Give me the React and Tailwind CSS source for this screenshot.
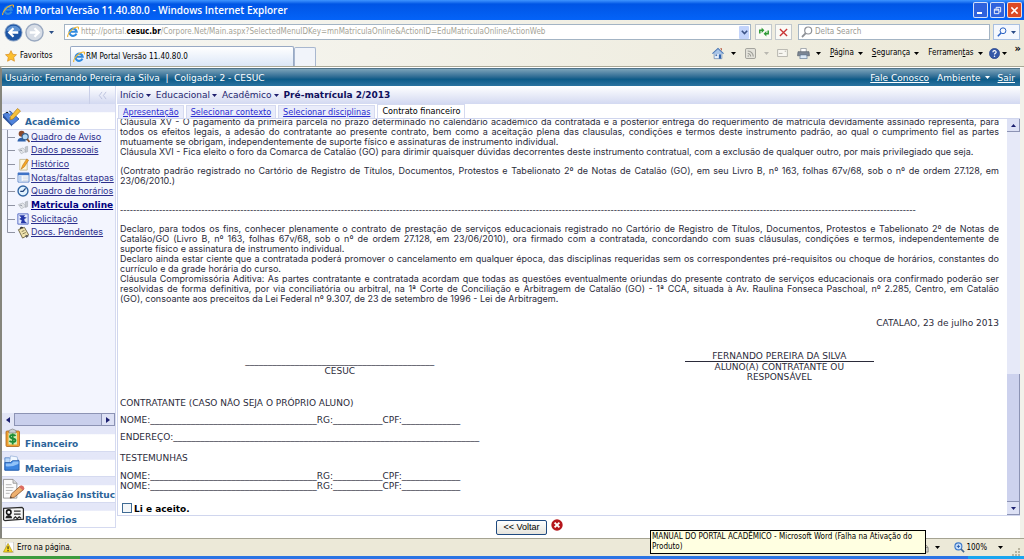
import React from "react";

const Caret = ({ className = "" }) => (
  <svg viewBox="0 0 5 3" className={"h-[3px] w-[5px] shrink-0 " + className} fill="currentColor">
    <path d="M0 0h5L2.5 3z" />
  </svg>
);

const IELogo = ({ className = "" }) => (
  <svg viewBox="0 0 16 16" className={"h-[12px] w-[12px] shrink-0 " + className} fill="none">
    <path d="M12.6 10.2A4.8 4.8 0 1 1 12.9 7.6H4.5" stroke="#2f8ae0" strokeWidth="2.8" />
    <path d="M1.2 14.6C-.8 11 8.500 1.200 14.400 1.300c1.400.2 1.200 1.900.5 3.200" stroke="#f3b62c" strokeWidth="1.500" />
  </svg>
);

const BackIcon = () => (
  <svg viewBox="0 0 20 20" className="h-[19px] w-[19px]">
    <circle cx="10" cy="10" r="9.500" fill="#8ba3c4" />
    <circle cx="10" cy="10" r="8.500" fill="#1d55a5" />
    <path d="M2.500 8a8 8 0 0 1 15 0q-7.500 3-15 0z" fill="#5f93d3" />
    <path d="M15 10H6m4-4.500L5.500 10l4.500 4.500" fill="none" stroke="#fff" strokeWidth="2.400" />
  </svg>
);

const ForwardIcon = () => (
  <svg viewBox="0 0 20 20" className="h-[19px] w-[19px]">
    <circle cx="10" cy="10" r="9" fill="#d7dde6" stroke="#9aa9c0" strokeWidth="1.500" />
    <path d="M5 10h9m-4-4.500 4.500 4.500-4.500 4.500" fill="none" stroke="#fff" strokeWidth="2.400" />
  </svg>
);

const StarIcon = () => (
  <svg viewBox="0 0 14 14" className="h-[12px] w-[12px]">
    <path d="M7 .8 9 5l4.400.500-3.200 3.100.8 4.500L7 10.900 3 13.100l.8-4.500L.6 5.500 5 5z" fill="#fbbf2f" stroke="#d88a1c" strokeWidth=".8" />
  </svg>
);

const Magnifier = ({ className = "h-[12px] w-[12px]" }) => (
  <svg viewBox="0 0 12 12" className={"shrink-0 " + className} fill="none" stroke="currentColor">
    <circle cx="7.200" cy="4.500" r="3.500" strokeWidth="1.200" />
    <path d="M4.800 7.200 1 11" strokeWidth="1.800" />
  </svg>
);

const RefreshIcon = () => (
  <svg viewBox="0 0 12 12" className="h-[12px] w-[12px]" fill="none" stroke="#2f9a35" strokeWidth="1.500">
    <path d="M1.800 7.500V4.300h2.500" />
    <path d="M3.600 1.600 6.400 4.300 3.600 7z" fill="#2f9a35" stroke="none" />
    <path d="M10.200 4.500v3.200H7.700" />
    <path d="M8.400 5 5.600 7.700l2.800 2.700z" fill="#2f9a35" stroke="none" />
  </svg>
);

const StopIcon = () => (
  <svg viewBox="0 0 10 10" className="h-[9px] w-[9px]" stroke="#c93434" strokeWidth="1.500">
    <path d="M1 1l8 8M9 1 1 9" />
  </svg>
);

const HomeIcon = () => (
  <svg viewBox="0 0 14 14" className="h-[13px] w-[12px]">
    <path d="M2.500 6.500h9V13h-9z" fill="#e8f0fa" stroke="#5c7da8" strokeWidth=".8" />
    <path d="M.5 7.200 7 1l6.500 6.200" fill="#a7c4e8" stroke="#4d78b4" strokeWidth="1.200" />
    <path d="M9.500 1h2v3z" fill="#b34d35" />
    <path d="M8 8h2.500v5H8z" fill="#2f62ad" />
    <path d="M4 8h2v2H4z" fill="#4b77b5" />
  </svg>
);

const FeedIcon = () => (
  <svg viewBox="0 0 12 12" className="h-[11px] w-[11px]" fill="none" stroke="#9a9a94">
    <rect x=".5" y=".5" width="11" height="11" rx="1.500" fill="#e3e2da" />
    <path d="M3 3.200a6 6 0 0 1 6 6M3 6a3.200 3.200 0 0 1 3.200 3.200" strokeWidth="1.200" />
    <circle cx="3.500" cy="8.700" r=".8" fill="#9a9a94" stroke="none" />
  </svg>
);

const MailIcon = () => (
  <svg viewBox="0 0 12 9" className="h-[8px] w-[11px]" fill="#f7f6f0" stroke="#b1b0a8">
    <path d="M.5.500h11v8H.5z" />
    <path d="M2 5h4M8.500 2.500h1.500" />
  </svg>
);

const PrinterIcon = () => (
  <svg viewBox="0 0 14 12" className="h-[11px] w-[13px]">
    <path d="M4 .5h6V5H4z" fill="#fff" stroke="#777f8c" strokeWidth=".7" />
    <path d="M1 4h12l.5 4.500H.5z" fill="#7c8694" stroke="#555e6b" strokeWidth=".7" />
    <path d="M3.500 7.500h7L11 11.500H3z" fill="#dce9f7" stroke="#57708e" strokeWidth=".7" />
  </svg>
);

const HelpIcon = () => (
  <svg viewBox="0 0 12 12" className="h-[11px] w-[11px]">
    <circle cx="6" cy="6" r="5.600" fill="#3558a8" stroke="#223d80" strokeWidth=".6" />
    <path d="M4.200 4.600C4.300 2.400 7.900 2.400 7.800 4.600 7.700 5.800 6 5.800 6 7.200" fill="none" stroke="#fff" strokeWidth="1.300" />
    <circle cx="6" cy="9" r=".8" fill="#fff" />
  </svg>
);

const ModuleAcademic = () => (
  <svg viewBox="0 0 20 20" className="h-[20px] w-[20px]">
    <path d="M1 7.500 8 4l9 8-7 6z" fill="#4f83dc" stroke="#2450a0" strokeWidth=".8" />
    <path d="M1 7.500v3L10 19.500V18z" fill="#2450a0" />
    <path d="M3 5.500 5 3.500l3 3M8 9l2 2" stroke="#d7e6ff" strokeWidth="1.500" />
    <path d="M8.500 9.500 15.500 1.500l3 2.500-7.500 8-3 .7z" fill="#f6c13c" stroke="#b07c18" strokeWidth=".7" />
  </svg>
);

const ModuleFinance = () => (
  <svg viewBox="0 0 20 20" className="h-[20px] w-[20px]">
    <rect x="4" y="3" width="13.500" height="15.500" rx="1" fill="#f0a030" stroke="#a8641c" strokeWidth=".8" />
    <path d="M6.500 5h8.500v11.500H6.500z" fill="#d4efb6" />
    <path d="M7 5V2.500q3.500-3 7 0V5z" fill="#c9ccd1" stroke="#777" strokeWidth=".6" />
    <path d="M13.500 8c-1-1.500-5.500-1.500-5.500.8 0 2.200 5.500 1.200 5.500 3.500 0 2.400-4.800 2-6 .5M10.700 5.500v11" fill="none" stroke="#1f8c35" strokeWidth="1.800" />
  </svg>
);

const ModuleMaterials = () => (
  <svg viewBox="0 0 20 20" className="h-[19px] w-[19px]">
    <path d="M3 4h5l1.500 2H17v11H3z" fill="#bcd9fa" stroke="#4777bd" strokeWidth=".8" />
    <path d="M9 2l7 1 1 6H8z" fill="#f2f8ff" stroke="#7da0d0" strokeWidth=".6" />
    <path d="M3 9h6l2-2h7v10H3z" fill="#3d85e0" stroke="#1d55a5" strokeWidth=".8" />
    <path d="M4 10h6l2-2h5.500l-.3 2.500Q10 14 4 13z" fill="#91c2f8" />
  </svg>
);

const ModuleEvaluation = () => (
  <svg viewBox="0 0 24 22" className="h-[22px] w-[24px]">
    <path d="M1.500 1h10l4 4v15.500h-14z" fill="#fcfcfc" stroke="#8d8d8d" strokeWidth=".9" />
    <path d="M11.500 1v4h4" fill="#ddd" stroke="#8d8d8d" strokeWidth=".8" />
    <path d="M4 6.500h6M4 9.500h8M4 12.500h7M4 15.500h4" stroke="#b5b5b5" />
    <path d="M8.500 20.500l1.500-4.500 9-8 3.500 3.500-9.500 8z" fill="#eeb06f" stroke="#8f5b35" strokeWidth=".9" />
    <path d="M18 9l2-2q3 .5 3.500 3.500l-1.500 2z" fill="#dc6b62" />
    <path d="M8.500 20.500l.6-1.900 1.400 1.200z" fill="#333" />
  </svg>
);

const ModuleReports = () => (
  <svg viewBox="0 0 24 18" className="h-[17px] w-[23px]">
    <path d="M1.500 2.500 21 1.500l1.500 1.500v11L3 15.500l-1.500-1z" fill="#f5f5f5" stroke="#2b2b2b" strokeWidth="1.300" />
    <circle cx="7" cy="6.500" r="2.400" fill="#fff" stroke="#111" strokeWidth="1.600" />
    <path d="M3.500 13c.3-4.500 6.700-4.500 7 0z" fill="#222" />
    <path d="M12.500 5.500h7M12.500 8.500h7" stroke="#333" strokeWidth="1.300" />
    <path d="M12 13.500l2-2 2 2 2-2 2 1.500" stroke="#222" fill="none" strokeWidth="1.200" />
  </svg>
);

const NoticeIcon = () => (
  <svg viewBox="0 0 14 14" className="h-[13px] w-[13px]">
    <circle cx="5" cy="4" r="3.200" fill="#8a4a2b" />
    <path d="M.5 12.500C.5 7 9 7 9.500 12.500z" fill="#2e62ad" />
    <circle cx="8.800" cy="7.200" r="3.300" fill="#b5dcf7" stroke="#35618f" strokeWidth="1.200" />
    <path d="M11 9.800l2.500 3" stroke="#8c4f22" strokeWidth="1.800" />
  </svg>
);

const CardIcon = () => (
  <svg viewBox="0 0 14 12" className="h-[10px] w-[12px]">
    <path d="M1.500 5.500 7 3.500l3.500 4-5.500 3z" fill="#e3e6ea" stroke="#b1b5bb" strokeWidth=".8" />
    <path d="M3 6.500q2-1.500 3 1" fill="none" stroke="#848c99" />
    <path d="M9.500 2.500l3-1v6.500l-2.500 1z" fill="#c5c9cf" stroke="#9da3ac" strokeWidth=".6" />
  </svg>
);

const HistoryIcon = () => (
  <svg viewBox="0 0 14 14" className="h-[13px] w-[13px]">
    <path d="M3 1.500h8v11.500H3z" fill="#fdf6da" stroke="#b9ad83" strokeWidth=".8" />
    <path d="M4.500 12 6 8l4.500-7 2 1.300L8 9.500z" fill="#f5a823" stroke="#b76d17" strokeWidth=".6" />
  </svg>
);

const TableIcon = () => (
  <svg viewBox="0 0 14 12" className="h-[11px] w-[13px]">
    <path d="M1 1h12v10H1z" fill="#fff" stroke="#5d86c8" />
    <path d="M1 1h12v2.500H1z" fill="#3f73c7" />
    <path d="M2 4h3v6.500H2z" fill="#bdd4f3" />
    <path d="M6 5.500h6M6 7.500h6M6 9.500h6" stroke="#b4c2d8" strokeWidth=".7" />
  </svg>
);

const ClockIcon = () => (
  <svg viewBox="0 0 14 14" className="h-[12px] w-[12px]">
    <circle cx="7" cy="7" r="5.800" fill="#e0f1fd" stroke="#2f64a3" strokeWidth="1.600" />
    <path d="M10 4 7 7.500H3.800" fill="none" stroke="#1d3f78" strokeWidth="1.500" />
  </svg>
);

const RequestIcon = () => (
  <svg viewBox="0 0 14 14" className="h-[12px] w-[12px]">
    <path d="M1 1h12v12H1z" fill="#e3e9fb" stroke="#4a5fc0" />
    <path d="M2.500 2.500h7L8 4.500l3.500 1L8.500 7l.5 2.500 3 2.500H4.500l1-3.500L2.500 7 5 5.500z" fill="#2638a8" />
  </svg>
);

const DocsIcon = () => (
  <svg viewBox="0 0 14 14" className="h-[13px] w-[13px]">
    <path d="M1.500 4 8 1.500l4.500 8L6 13z" fill="#f1e4ae" stroke="#6e6541" />
    <path d="M3.500 3q.5-2.500 3-1" fill="none" stroke="#333" strokeWidth="1.300" />
    <path d="M5 6l3-1.200M6 8.500l3.500-1.500" stroke="#807950" />
    <path d="M9 9.500l4 1-3 2.500z" fill="#5b5b5b" />
  </svg>
);

const WarningIcon = () => (
  <svg viewBox="0 0 12 12" className="h-[11px] w-[11px]">
    <path d="M3 0h8.500v11.500H3z" fill="#fff" stroke="#aaa" strokeWidth=".5" />
    <path d="M5.500 1.500 10.500 11H.5z" fill="#f8d921" stroke="#a88b0c" strokeWidth=".7" />
    <path d="M5.500 4.500v3.500M5.500 8.800V10" stroke="#222" strokeWidth="1.200" />
  </svg>
);

const CancelIcon = () => (
  <svg viewBox="0 0 12 12" className="h-[12px] w-[12px]">
    <circle cx="6" cy="6" r="5.700" fill="#b5161c" />
    <path d="M3.600 3.600l4.800 4.800M8.400 3.600 3.600 8.400" stroke="#fff" strokeWidth="1.900" />
  </svg>
);

const LockIcon = () => (
  <svg viewBox="0 0 12 12" className="h-[11px] w-[11px]" fill="none" stroke="#8b8b86">
    <path d="M1 9a5 5 0 0 1 6-7" stroke="#b9c2cf" />
    <path d="M5 6h5v5H5z" fill="#d2d2cc" />
    <path d="M6 6V4.500q1.500-2 3 0V6" />
  </svg>
);

const ZoomIcon = () => (
  <svg viewBox="0 0 12 12" className="h-[11px] w-[11px]" fill="none">
    <circle cx="4.800" cy="4.800" r="3.800" fill="#cfe3fa" stroke="#3b78c9" strokeWidth="1.200" />
    <path d="M4.800 3v3.600M3 4.800h3.600" stroke="#2159ad" />
    <path d="M7.600 7.600 11 11" stroke="#41658f" strokeWidth="1.800" />
  </svg>
);

const menuItems = [
  { label: "Quadro de Aviso", icon: NoticeIcon },
  { label: "Dados pessoais", icon: CardIcon },
  { label: "Histórico", icon: HistoryIcon },
  { label: "Notas/faltas etapas", icon: TableIcon },
  { label: "Quadro de horários", icon: ClockIcon },
  { label: "Matricula online", icon: CardIcon, active: true },
  { label: "Solicitação", icon: RequestIcon },
  { label: "Docs. Pendentes", icon: DocsIcon },
];

const modules = [
  { label: "Financeiro", icon: ModuleFinance },
  { label: "Materiais", icon: ModuleMaterials },
  { label: "Avaliação Instituc", icon: ModuleEvaluation },
  { label: "Relatórios", icon: ModuleReports },
];

const tabs = ["Apresentação", "Selecionar contexto", "Selecionar disciplinas"];

function TitleBar() {
  return (
    <header className="flex h-[20px] shrink-0 items-center gap-[2px] bg-linear-to-b from-[#3f95ff] via-[#0055e5] via-20% to-[#0463f8] px-[2px] text-white">
      <IELogo />
      <h1 className="flex-1 truncate font-['Open_Sans',sans-serif] text-[10px] leading-[14px] font-semibold">
        RM Portal Versão 11.40.80.0 - Windows Internet Explorer
      </h1>
      <div className="flex gap-[2px]">
        <button aria-label="Minimizar" className="flex h-[16px] w-[15px] items-end rounded-[2px] border border-white/80 bg-[#2f62dd] p-[3px]">
          <span className="h-[2px] w-[5px] bg-white" />
        </button>
        <button aria-label="Restaurar" className="flex h-[16px] w-[15px] items-center justify-center rounded-[2px] border border-white/80 bg-[#2f62dd]">
          <svg viewBox="0 0 10 10" className="h-[9px] w-[9px]" fill="none" stroke="#fff">
            <path d="M3.500 3V1.500h5v5H7M1.500 3.500h5v5h-5zM1.500 4.500h5" />
          </svg>
        </button>
        <button aria-label="Fechar" className="flex h-[16px] w-[15px] items-center justify-center rounded-[2px] border border-white/80 bg-[#dc4a24]">
          <svg viewBox="0 0 10 10" className="h-[9px] w-[9px]" stroke="#fff" strokeWidth="1.700">
            <path d="M1.500 1.500l7 7M8.500 1.500l-7 7" />
          </svg>
        </button>
      </div>
    </header>
  );
}

function AddressRow() {
  return (
    <div className="flex h-[24px] items-center px-[4px]">
      <div className="flex items-center gap-[2px] pr-[10px]">
        <button aria-label="Voltar página"><BackIcon /></button>
        <button aria-label="Avançar página"><ForwardIcon /></button>
        <button aria-label="Páginas recentes" className="pl-[3px] text-[#2c4f86]"><Caret /></button>
      </div>
      <div className="flex h-[16px] flex-1 items-center border border-[#a3b4c4] bg-white pl-[2px]">
        <IELogo />
        <p className="flex-1 truncate pl-[2px] text-[8px] leading-[12px] text-[#a5a396]">
          http://portal.<b className="text-black">cesuc.br</b>/Corpore.Net/Main.aspx?SelectedMenuIDKey=mnMatriculaOnline&amp;ActionID=EduMatriculaOnlineActionWeb
        </p>
        <button aria-label="Endereços" className="mr-[1px] flex h-[13px] w-[10px] items-center justify-center rounded-[1px] bg-[#c3d4fb]">
          <svg viewBox="0 0 7 5" className="h-[5px] w-[7px]" fill="none" stroke="#3c5487" strokeWidth="1.600"><path d="M.8.800 3.500 3.500 6.200.8" /></svg>
        </button>
      </div>
      <button aria-label="Atualizar" className="ml-[4px] flex h-[16px] w-[17px] items-center justify-center border border-[#c2c8cc] bg-[#fafaf6]"><RefreshIcon /></button>
      <button aria-label="Parar" className="ml-[3px] flex h-[16px] w-[17px] items-center justify-center border border-[#c2c8cc] bg-[#fafaf6]"><StopIcon /></button>
      <label className="ml-[6px] flex h-[16px] w-[192px] items-center border border-[#a3b4c4] bg-white pl-[2px]">
        <Magnifier className="h-[12px] w-[12px] text-[#8e9197]" />
        <input aria-label="Pesquisar" placeholder="Delta Search" className="w-full bg-transparent pl-[2px] text-[8px] leading-[12px] outline-none placeholder:text-[#9a9a94]" />
      </label>
      <button aria-label="Buscar" className="ml-[3px] flex h-[16px] w-[27px] items-center justify-between border border-[#a9c0e0] bg-[#f5f8fd] px-[3px] text-[#2a62c4]">
        <Magnifier className="h-[10px] w-[10px]" />
        <Caret className="text-[#2a4b86]" />
      </button>
    </div>
  );
}

function CommandRow() {
  return (
    <div className="flex h-[22px] items-end pr-[3px]">
      <button className="mb-[4px] flex w-[65px] items-center gap-[3px] pl-[5px] text-[8px] leading-[12px]">
        <StarIcon /> Favoritos
      </button>
      <div className="ml-[5px] flex h-[20px] w-[224px] items-center gap-[1px] rounded-t-[2px] border border-b-0 border-[#98a9c4] bg-linear-to-b from-white to-[#dce7f7] pl-[2px] text-[8px] leading-[12px]">
        <IELogo /> RM Portal Versão 11.40.80.0
      </div>
      <button aria-label="Nova guia" className="h-[19px] w-[22px] rounded-t-[2px] border border-b-0 border-[#a8b7cf] bg-[#f1f4fa]" />
      <div className="mb-[5px] ml-auto flex items-center text-[8px] leading-[12px]">
        <button aria-label="Página inicial" className="flex items-center gap-[7px]"><HomeIcon /><Caret /></button>
        <button aria-label="Feeds" className="ml-[9px] flex items-center gap-[8px] text-[#b9b8b0]"><FeedIcon /><Caret /></button>
        <button aria-label="Correio" className="ml-[8px]"><MailIcon /></button>
        <button aria-label="Imprimir" className="ml-[9px] flex items-center gap-[6px]"><PrinterIcon /><Caret /></button>
        <button className="ml-[9px] flex items-center gap-[4px]"><span><u>P</u>ágina</span><Caret /></button>
        <button className="ml-[9px] flex items-center gap-[4px]"><span><u>S</u>egurança</span><Caret /></button>
        <button className="ml-[9px] flex items-center gap-[4px]"><span>Ferramen<u>t</u>as</span><Caret /></button>
        <button aria-label="Ajuda" className="ml-[6px] flex items-center gap-[2px]"><HelpIcon /><Caret /></button>
        <button aria-label="Mais comandos" className="mb-[8px] ml-[8px] text-[11px] leading-[8px] font-bold">»</button>
      </div>
    </div>
  );
}

function PortalHeader() {
  return (
    <div className="flex h-[18px] shrink-0 items-center border-t border-[#50748a] bg-linear-to-b from-[#7ba3b9] via-[#0b5b88] via-60% to-[#2a73a0] px-[3px] text-[9px] leading-[12px] text-white">
      <p className="flex-1 whitespace-pre">Usuário: Fernando Pereira da Silva  |  Coligada: 2 - CESUC</p>
      <nav className="flex items-center gap-[8px] pr-[2px]">
        <a href="#fale" className="underline">Fale Conosco</a>
        <button className="flex items-center gap-[4px]">Ambiente <Caret /></button>
        <a href="#sair" className="underline">Sair</a>
      </nav>
    </div>
  );
}

function Module({ label, icon: Icon }) {
  return (
    <button className="flex min-h-0 w-full flex-1 items-center overflow-hidden border-b border-[#d5daf0] bg-linear-to-b from-[#e4e7f8] from-30% to-white to-35% text-left">
      <span className="flex w-[23px] shrink-0 items-center"><Icon /></span>
      <span className="pt-[11px] text-[9px] leading-[12px] font-bold whitespace-nowrap text-[#2c6499]">{label}</span>
    </button>
  );
}

function Sidebar() {
  return (
    <aside className="flex w-[114px] shrink-0 flex-col overflow-hidden border-r border-[#d5daf0]">
      <div className="flex h-[18px] shrink-0 items-center justify-end bg-linear-to-b from-white to-[#d3d9f1] text-[#b9c0dc]">
        <button aria-label="Recolher menu" className="flex h-full w-[26px] items-center justify-center border-l border-[#c9cfe8]">
          <svg viewBox="0 0 10 10" className="h-[9px] w-[9px]" fill="none" stroke="currentColor"><path d="M4.500 1l-3 4 3 4M9 1 6 5l3 4" /></svg>
        </button>
      </div>
      <div className="flex h-[26px] shrink-0">
        <Module label="Acadêmico" icon={ModuleAcademic} />
      </div>
      <div className="flex min-h-0 flex-1 flex-col bg-[#f3f5fe]">
        <ul className="ml-[5px] flex h-[109px] flex-col">
          {menuItems.map(({ label, icon: Icon, active }, i) => (
            <li key={label} className="flex min-h-0 flex-1 items-center">
              <svg viewBox="0 0 8 14" className="h-[14px] w-[8px] shrink-0" stroke="#8f93a3" fill="none">
                <path d={i === menuItems.length - 1 ? "M.5 0v7.500H8" : "M.5 0v14M0 7.500h8"} />
              </svg>
              <span className="flex w-[16px] shrink-0 items-center justify-center"><Icon /></span>
              <a
                href="#menu"
                className={
                  active
                    ? "text-[9px] leading-[12px] font-bold whitespace-nowrap text-[#000080] underline"
                    : "font-['Inter','DejaVu_Sans',sans-serif] text-[9px] leading-[12px] whitespace-nowrap text-[#2c2f8c] underline"
                }
              >
                {label}
              </a>
            </li>
          ))}
        </ul>
        <div className="mt-auto flex h-[13px] shrink-0 bg-[#e3e6f6] text-[#1b1f70]">
          <button aria-label="Rolar para a esquerda" className="flex w-[12px] items-center justify-center">
            <svg viewBox="0 0 4 6" className="h-[6px] w-[4px]" fill="currentColor"><path d="M4 0v6L0 3z" /></svg>
          </button>
          <div className="flex-1 border border-[#8c93b4] bg-[#c9cfec]" />
          <button aria-label="Rolar para a direita" className="flex w-[13px] items-center justify-center border border-l-0 border-[#8c93b4] bg-[#dde1f5]">
            <svg viewBox="0 0 4 6" className="h-[6px] w-[4px]" fill="currentColor"><path d="M0 0v6l4-3z" /></svg>
          </button>
        </div>
      </div>
      <div className="flex h-[102px] shrink-0 flex-col">
        {modules.map((m) => (
          <Module key={m.label} {...m} />
        ))}
      </div>
    </aside>
  );
}

function Contract() {
  return (
    <article className="-mt-[2px] min-w-0 flex-1 pr-[8px] pl-[2px] text-[9px] leading-[10px] text-[#2b2b3a]">
      <div className="text-justify font-['Inter','DejaVu_Sans',sans-serif]">
        <p>
          Cláusula XV - O pagamento da primeira parcela no prazo determinado no calendário acadêmico da contratada e a posterior entrega do requerimento de matrícula devidamente assinado representa, para todos os efeitos legais, a adesão do contratante ao presente contrato, bem como a aceitação plena das clausulas, condições e termos deste instrumento padrão, ao qual o cumprimento fiel as partes mutuamente se obrigam, independentemente de suporte físico e assinaturas de instrumento individual.
        </p>
        <p>
          Cláusula XVI - Fica eleito o foro da Comarca de Catalão (GO) para dirimir quaisquer dúvidas decorrentes deste instrumento contratual, com a exclusão de qualquer outro, por mais privilegiado que seja.
        </p>
        <p className="mt-[9px]">
          (Contrato padrão registrado no Cartório de Registro de Títulos, Documentos, Protestos e Tabelionato 2º de Notas de Catalão (GO), em seu Livro B, nº 163, folhas 67v/68, sob o nº de ordem 27.128, em 23/06/2010.)
        </p>
      </div>
      <p className="mt-[19px] overflow-hidden whitespace-nowrap">{"-".repeat(245)}</p>
      <div className="mt-[9px] text-justify font-['Inter','DejaVu_Sans',sans-serif]">
        <p>
          Declaro, para todos os fins, conhecer plenamente o contrato de prestação de serviços educacionais registrado no Cartório de Registro de Títulos, Documentos, Protestos e Tabelionato 2º de Notas de Catalão/GO (Livro B, nº 163, folhas 67v/68, sob o nº de ordem 27.128, em 23/06/2010), ora firmado com a contratada, concordando com suas cláusulas, condições e termos, independentemente de suporte&nbsp;físico e assinatura de instrumento individual.
        </p>
        <p>
          Declaro ainda estar ciente que a contratada poderá promover o cancelamento em qualquer época, das disciplinas requeridas sem os correspondentes pré-requisitos ou choque de horários, constantes do currículo e da grade horária do curso.
        </p>
        <p>
          Cláusula Compromissória Aditiva: As partes contratante e contratada acordam que todas as questões eventualmente oriundas do presente contrato de serviços educacionais ora confirmado poderão ser resolvidas de forma definitiva, por via conciliatória ou arbitral, na 1ª Corte de Conciliação e Arbitragem de Catalão (GO) - 1ª CCA, situada à Av. Raulina Fonseca Paschoal, nº 2.285, Centro, em Catalão (GO),&nbsp;consoante aos preceitos da Lei Federal nº 9.307, de 23 de setembro de 1996 - Lei de Arbitragem.
        </p>
      </div>
      <p className="mt-[14px] text-right">CATALAO, 23 de julho 2013</p>
      <div className="mt-[23px] grid grid-cols-2 text-center">
        <div className="pt-[5px]">
          <p>{"_".repeat(42)}</p>
          <p>CESUC</p>
        </div>
        <div>
          <p className="mx-auto w-[189px] border-b border-[#2b2b3a]">FERNANDO PEREIRA DA SILVA</p>
          <p className="mx-auto w-[140px]">ALUNO(A) CONTRATANTE OU RESPONSÁVEL</p>
        </div>
      </div>
      <p className="mt-[16px]">CONTRATANTE (CASO NÃO SEJA O PRÓPRIO ALUNO)</p>
      <p className="mt-[7px]">NOME:{"_".repeat(37)}RG:{"_".repeat(11)}CPF:{"_".repeat(13)}</p>
      <p className="mt-[7px]">ENDEREÇO:{"_".repeat(68)}</p>
      <p className="mt-[11px]">TESTEMUNHAS</p>
      <p className="mt-[8px]">NOME:{"_".repeat(37)}RG:{"_".repeat(11)}CPF:{"_".repeat(13)}</p>
      <p>NOME:{"_".repeat(37)}RG:{"_".repeat(11)}CPF:{"_".repeat(13)}</p>
      <label className="mt-[10px] flex items-center gap-[2px] pl-[2px] font-bold text-black">
        <input type="checkbox" className="h-[10px] w-[10px] appearance-none border border-[#3f6a93] bg-[#f3f6f8]" />
        <span className="pt-[2px] leading-[12px]">Li e aceito.</span>
      </label>
    </article>
  );
}

function ScrollBar() {
  return (
    <div className="flex w-[13px] shrink-0 flex-col bg-[#e6e9f8] text-[#1b1f70]">
      <button aria-label="Rolar para cima" className="flex h-[13px] items-center justify-center border-r border-b border-[#8c93b4] bg-[#dde1f5]">
        <Caret className="rotate-180" />
      </button>
      <div className="flex-1" />
      <div className="h-[128px] border-r border-b border-[#8c93b4] bg-[#cdd2ee]" />
      <button aria-label="Rolar para baixo" className="flex h-[13px] items-center justify-center border-r border-b border-[#8c93b4] bg-[#dde1f5]">
        <Caret />
      </button>
    </div>
  );
}

function MainPane() {
  return (
    <main className="ml-[1px] flex min-w-0 flex-1 flex-col">
      <nav className="flex h-[18px] shrink-0 items-center gap-[5px] bg-linear-to-b from-white to-[#d3d9f1] pl-[3px] text-[9px] leading-[12px] text-[#1f1f6e]">
        <button className="flex items-center gap-[2px]">Início <Caret /></button>
        <button className="flex items-center gap-[2px]">Educacional <Caret /></button>
        <button className="flex items-center gap-[2px]">Acadêmico <Caret /></button>
        <b className="text-[#10105c]">Pré-matrícula 2/2013</b>
      </nav>
      <div className="flex h-[14px] shrink-0 items-end gap-[2px] pl-[1px] font-['DejaVu_Sans_Condensed','DejaVu_Sans',sans-serif] text-[9px] leading-[12px]">
        {tabs.map((t) => (
          <a key={t} href="#etapa" className="h-[13px] border border-b-0 border-[#d5daf0] bg-[#e9ecfa] px-[4px] text-[#2a2ad0] underline">
            {t}
          </a>
        ))}
        <span className="h-[14px] border border-b-0 border-[#d5daf0] bg-white px-[4px] text-black">Contrato financeiro</span>
      </div>
      <section className="flex min-h-0 flex-1 overflow-hidden border border-r-0 border-[#d0d6ee]">
        <Contract />
        <ScrollBar />
      </section>
      <div className="flex h-[22px] shrink-0 items-center justify-center gap-[4px] pr-[78px]">
        <button className="h-[15px] rounded-[2px] border border-[#1f4a80] bg-linear-to-b from-white to-[#e6e4dc] px-[6px] font-['Liberation_Sans',sans-serif] text-[9px] leading-[12px]">
          &lt;&lt; Voltar
        </button>
        <button aria-label="Cancelar" className="mb-[4px]"><CancelIcon /></button>
      </div>
    </main>
  );
}

function StatusBar() {
  return (
    <footer className="relative flex h-[18px] shrink-0 items-center border-t border-[#a5a392] bg-[#ece9d8] pr-[4px] pl-[3px] text-[8px] leading-[12px]">
      <WarningIcon />
      <p className="flex-1 pl-[3px]">Erro na página.</p>
      <button aria-label="Segurança da página" className="flex items-center gap-[5px]"><LockIcon /><Caret /></button>
      <button className="ml-[14px] flex items-center gap-[1px]">
        <ZoomIcon />
        <span className="pr-[10px]">100%</span>
        <Caret />
      </button>
      <svg viewBox="0 0 8 8" className="ml-[9px] h-[8px] w-[8px] self-end" fill="#b8b49f">
        <path d="M6 0h2v2H6zM3 3h2v2H3zM6 3h2v2H6zM0 6h2v2H0zM3 6h2v2H3zM6 6h2v2H6z" />
      </svg>
      <div role="tooltip" className="absolute right-[98px] bottom-[2px] w-[276px] border border-black bg-[#ffffe1] px-[1px] py-px leading-[10px]">
        MANUAL DO PORTAL ACADÊMICO - Microsoft Word (Falha na Ativação do Produto)
      </div>
    </footer>
  );
}

export default function App() {
  return (
    <div className="flex h-screen flex-col overflow-hidden bg-white font-['DejaVu_Sans_Condensed','DejaVu_Sans',sans-serif] text-black">
      <TitleBar />
      <div className="shrink-0 border-b border-[#aaa896] bg-linear-to-r from-[#f7f7f4] to-[#ece9d8]">
        <AddressRow />
        <CommandRow />
      </div>
      <div className="flex min-h-0 flex-1 flex-col border-t border-r-4 border-l-2 border-t-white border-r-[#f2f1ea] border-l-[#85857c] font-['DejaVu_Sans',sans-serif]">
        <PortalHeader />
        <div className="flex min-h-0 flex-1">
          <div className="flex flex-col pb-[10px]">
            <div className="flex min-h-0 flex-1"><Sidebar /></div>
          </div>
          <MainPane />
        </div>
      </div>
      <StatusBar />
      <div className="flex h-[3px] shrink-0 bg-[#2b74e4]">
        <div className="w-[80px] bg-[#3c9b3f]" />
        <div className="flex-1" />
        <div className="w-[56px] bg-[#19a5ef]" />
      </div>
    </div>
  );
}
